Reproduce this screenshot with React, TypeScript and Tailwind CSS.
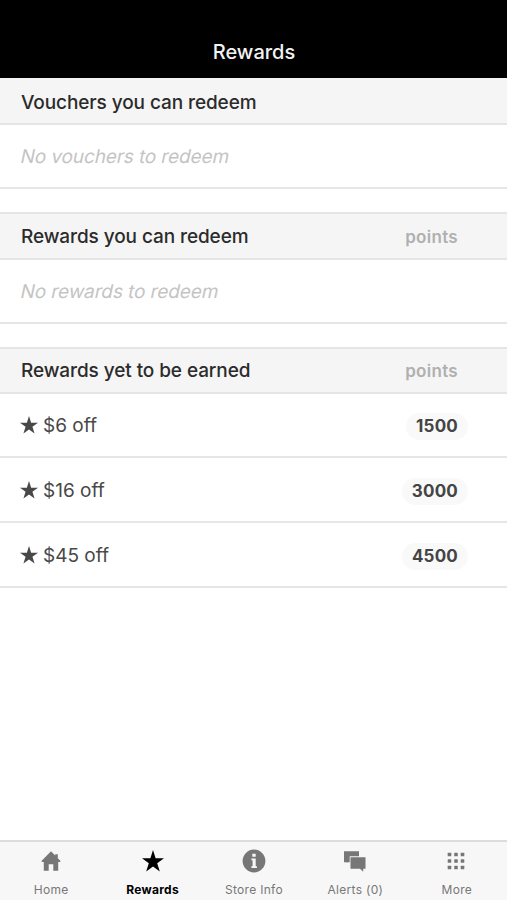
const rewards = [
  { name: '$6 off', points: 1500, row: 'h-[64px]' },
  { name: '$16 off', points: 3000, row: 'h-[65px]' },
  { name: '$45 off', points: 4500, row: 'h-[65px]' },
];

function StarIcon({ className }: { className: string }) {
  return (
    <svg viewBox="0 0 22 22" className={className} fill="currentColor">
      <path d="M11 0l2.6 8.2H22l-6.8 5 2.6 8.3L11 16.4l-6.8 5.1 2.6-8.3L0 8.2h8.4z" />
    </svg>
  );
}

function HomeIcon() {
  return (
    <svg viewBox="0 0 20 20" className="h-5 w-5" fill="currentColor">
      <path d="M10 0.3L0.7 9.8v1.2h2.1v8.7h4.9v-6.4h4.6v6.4h4.9V11h2.1V9.8L16.8 7.3V3.2h-2.6v1.4z" />
    </svg>
  );
}

function InfoIcon() {
  return (
    <svg viewBox="0 0 24 24" className="h-6 w-6">
      <circle cx="12" cy="12" r="11.4" fill="currentColor" />
      <path d="M10.3 4.8h3.4v2.9h-3.4zM9.4 9.4h4.3v7.8h1.2v1.9H9.4v-1.9h1.2v-5.9H9.4z" fill="#f7f7f7" />
    </svg>
  );
}

function AlertsIcon() {
  return (
    <svg viewBox="0 0 22 21" className="h-[21px] w-[22px]" fill="currentColor">
      <path d="M0 0.3h15v5H5.7v5.9H3.8l-1 0.8v-0.8H0z" />
      <path d="M6.5 6.2H21.5v11.6h-2.3v3l-3.2-3H6.5z" />
    </svg>
  );
}

function GridIcon() {
  return (
    <svg viewBox="0 0 18 18" className="mr-px h-[18px] w-[18px]" fill="currentColor">
      {[0.7, 7.2, 13.7].map(y =>
        [0.7, 7.2, 13.7].map(x => <rect key={`${x}-${y}`} x={x} y={y} width="3.6" height="3.6" rx="0.6" />)
      )}
    </svg>
  );
}

const tabs = [
  { label: 'Home', icon: <HomeIcon /> },
  { label: 'Rewards', icon: <StarIcon className="h-[22px] w-[22px]" />, active: true },
  { label: 'Store Info', icon: <InfoIcon /> },
  { label: 'Alerts (0)', icon: <AlertsIcon /> },
  { label: 'More', icon: <GridIcon /> },
];

function SectionHeader({ title, points, className }: { title: string; points?: boolean; className: string }) {
  return (
    <div className={`flex items-center justify-between border-b-2 border-[#e5e5e5] bg-[#f5f5f5] pl-[21px] pr-[49px] ${className}`}>
      <h2 className="pt-0.5 text-[19px] font-medium tracking-[-0.09px] text-[#2b2b2b]">{title}</h2>
      {points && <span className="pt-[3px] text-[17px] font-semibold tracking-[0.3px] text-[#b0b0b0]">points</span>}
    </div>
  );
}

function EmptyRow({ text, className }: { text: string; className: string }) {
  return (
    <div className={`flex items-center border-b-2 border-[#e6e6e6] pl-[21px] ${className}`}>
      <p className="-skew-x-12 pt-0.5 text-[19px] tracking-[-0.11px] text-[#c4c4c4]">{text}</p>
    </div>
  );
}

export default function App() {
  return (
    <div className="flex h-[900px] w-full flex-col bg-white font-['Inter',sans-serif]">
      <header className="flex h-[78px] shrink-0 items-end justify-center bg-black pb-[11px]">
        <h1 className="pl-px text-[20px] leading-[30px] font-medium text-[#f2f2f2]">Rewards</h1>
      </header>

      <main className="flex-1">
        <section className="mb-[23px]">
          <SectionHeader title="Vouchers you can redeem" className="h-[47px] pt-[3px]" />
          <EmptyRow text="No vouchers to redeem" className="h-[64px]" />
        </section>
        <section className="mb-[23px]">
          <SectionHeader title="Rewards you can redeem" points className="h-[48px] border-t-2" />
          <EmptyRow text="No rewards to redeem" className="h-[64px]" />
        </section>
        <section>
          <SectionHeader title="Rewards yet to be earned" points className="h-[47px] border-t-2" />
          {rewards.map(reward => (
            <div key={reward.name} className={`flex items-center justify-between border-b-2 border-[#e6e6e6] pl-[20px] pr-[39px] ${reward.row}`}>
              <div className="flex items-center gap-[5px] text-[#484848]">
                <StarIcon className="h-[18px] w-[18px]" />
                <span className="pt-[3px] text-[19px]">{reward.name}</span>
              </div>
              <span className="mt-[3px] rounded-full bg-[#f9f9f9] px-2.5 text-[17px] leading-[27px] font-bold tracking-[0.2px] text-[#444]">{reward.points}</span>
            </div>
          ))}
        </section>
      </main>

      <nav className="grid h-[60px] shrink-0 grid-cols-5 border-t-2 border-[#dcdcdc] bg-[#f7f7f7]">
        {tabs.map(tab => (
          <div key={tab.label} className={`flex flex-col items-center ${tab.active ? 'font-bold text-black' : 'text-[#777]'}`}>
            <div className="flex h-[38px] items-center justify-center pl-px">{tab.icon}</div>
            <span className="pt-[2px] pl-px text-[12px] leading-4 tracking-[0.3px]">{tab.label}</span>
          </div>
        ))}
      </nav>
    </div>
  );
}
